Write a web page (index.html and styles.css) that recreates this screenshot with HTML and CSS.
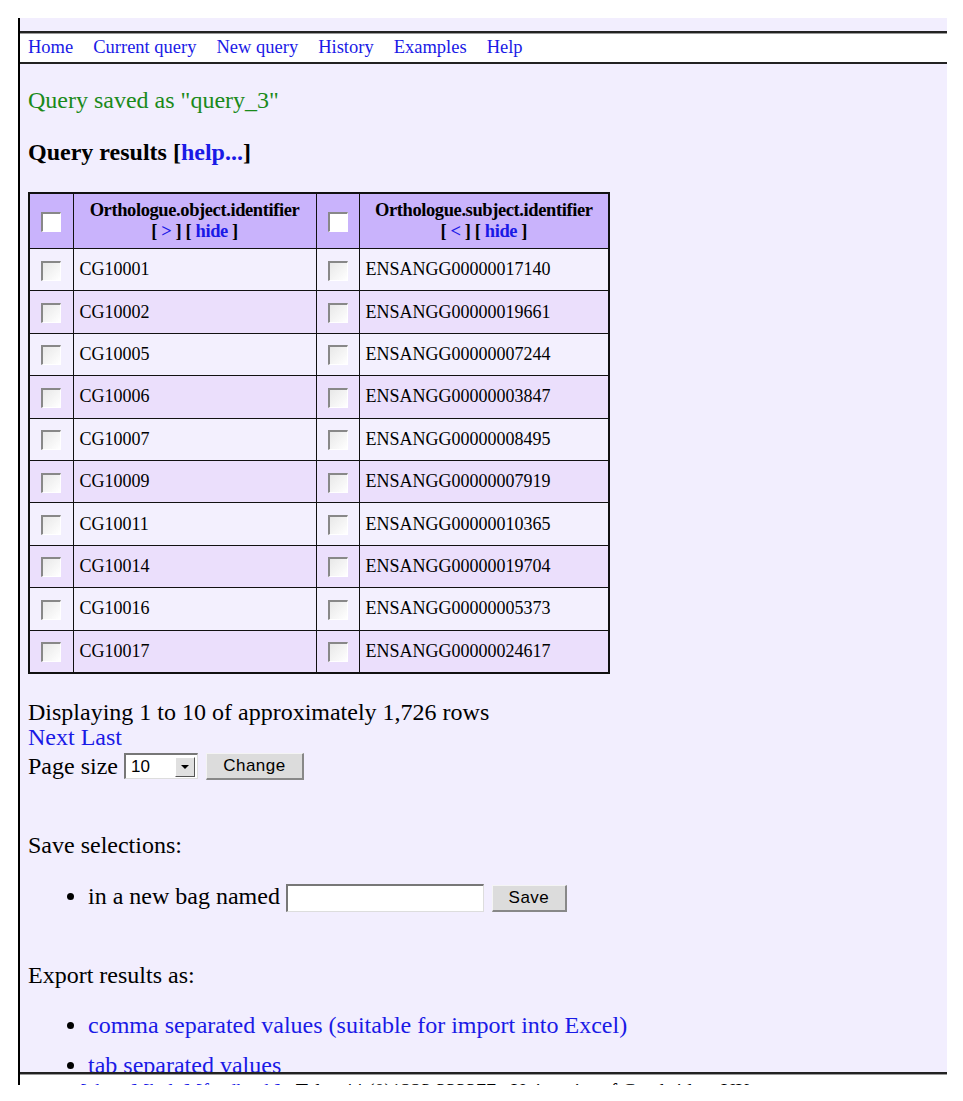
FILE: index.html
```html
<!DOCTYPE html>
<html>
<head>
<meta charset="utf-8">
<title>Query results</title>
<link rel="stylesheet" href="styles.css">
</head>
<body>
<div class="frame">
  <div class="topstrip"></div>
  <nav class="nav">
    <a href="#">Home</a>
    <a href="#">Current query</a>
    <a href="#">New query</a>
    <a href="#">History</a>
    <a href="#">Examples</a>
    <a href="#">Help</a>
  </nav>
  <main class="main">
    <p class="saved">Query saved as "query_3"</p>
    <h2 class="title">Query results [<a href="#">help...</a>]</h2>
    <table class="results">
      <colgroup>
        <col class="c-check"><col class="c-obj"><col class="c-check2"><col class="c-subj">
      </colgroup>
      <thead>
        <tr>
          <th><span class="cb cb-head"></span></th>
          <th>Orthologue.object.identifier<br>[ <a href="#">&gt;</a> ] [ <a href="#">hide</a> ]</th>
          <th><span class="cb cb-head"></span></th>
          <th>Orthologue.subject.identifier<br>[ <a href="#">&lt;</a> ] [ <a href="#">hide</a> ]</th>
        </tr>
      </thead>
      <tbody>
        <tr class="odd"><td><span class="cb"></span></td><td>CG10001</td><td><span class="cb"></span></td><td>ENSANGG00000017140</td></tr>
        <tr class="even"><td><span class="cb"></span></td><td>CG10002</td><td><span class="cb"></span></td><td>ENSANGG00000019661</td></tr>
        <tr class="odd"><td><span class="cb"></span></td><td>CG10005</td><td><span class="cb"></span></td><td>ENSANGG00000007244</td></tr>
        <tr class="even"><td><span class="cb"></span></td><td>CG10006</td><td><span class="cb"></span></td><td>ENSANGG00000003847</td></tr>
        <tr class="odd"><td><span class="cb"></span></td><td>CG10007</td><td><span class="cb"></span></td><td>ENSANGG00000008495</td></tr>
        <tr class="even"><td><span class="cb"></span></td><td>CG10009</td><td><span class="cb"></span></td><td>ENSANGG00000007919</td></tr>
        <tr class="odd"><td><span class="cb"></span></td><td>CG10011</td><td><span class="cb"></span></td><td>ENSANGG00000010365</td></tr>
        <tr class="even"><td><span class="cb"></span></td><td>CG10014</td><td><span class="cb"></span></td><td>ENSANGG00000019704</td></tr>
        <tr class="odd"><td><span class="cb"></span></td><td>CG10016</td><td><span class="cb"></span></td><td>ENSANGG00000005373</td></tr>
        <tr class="even"><td><span class="cb"></span></td><td>CG10017</td><td><span class="cb"></span></td><td>ENSANGG00000024617</td></tr>
      </tbody>
    </table>
    <div class="paging">
      <div>Displaying 1 to 10 of approximately 1,726 rows</div>
      <div><a href="#">Next</a> <a href="#">Last</a></div>
      <div class="pagesize">Page size
        <span class="select"><span class="sel-val">10</span><span class="sel-btn"><svg width="10" height="6" viewBox="0 0 10 6"><path d="M1 1h8L5 5z" fill="#000"/></svg></span></span>
        <span class="btn btn-change">Change</span>
      </div>
    </div>
    <p class="section save-head">Save selections:</p>
    <ul class="list save-list">
      <li>in a new bag named <span class="textbox"></span> <span class="btn btn-save">Save</span></li>
    </ul>
    <p class="section export-head">Export results as:</p>
    <ul class="list export-list">
      <li><a href="#">comma separated values (suitable for import into Excel)</a></li>
      <li><a href="#">tab separated values</a></li>
    </ul>
  </main>
  <footer class="footer">
    <span class="foot-text"><a href="#">[about]</a> <a href="#">[help]</a> <a href="#">[feedback]</a> &nbsp; Tel: +44 (0)1223 333377 &nbsp; University of Cambridge, UK</span>
  </footer>
</div>
</body>
</html>
```
FILE: styles.css
```css
html, body {
  margin: 0;
  padding: 0;
  background: #ffffff;
}
body {
  font-family: "Liberation Serif", "Times New Roman", serif;
  color: #000;
}
a {
  color: #1a1ae6;
  text-decoration: none;
}
.frame {
  margin: 18px 0 0 18px;
  width: 927px;
  border-left: 2px solid #000;
  height: 1067px;
  overflow: hidden;
}
.topstrip {
  height: 13px;
  background: #f2eefe;
}
.nav {
  background: #ffffff;
  border-top: 2px solid #222;
  border-bottom: 2px solid #222;
  box-shadow: inset 0 1px 0 #999;
  height: 29px;
  display: flex;
  align-items: center;
  gap: 20px;
  padding-left: 8px;
  font-size: 18.5px;
}
.main {
  background: #f2eefe;
  height: 1008px;
  overflow: hidden;
  padding-left: 8px;
  padding-top: 1px;
  box-sizing: border-box;
}
.saved {
  color: #1a8a1a;
  font-size: 24px;
  line-height: 28px;
  margin: 21px 0 0 0;
}
.title {
  font-size: 24px;
  line-height: 28px;
  margin: 24px 0 0 0;
}
.results {
  margin-top: 26px;
  border-collapse: collapse;
  border: 2px solid #111;
  table-layout: fixed;
  width: 580px;
}
.c-check { width: 44px; }
.c-obj { width: 243px; }
.c-check2 { width: 43px; }
.c-subj { width: 250px; }
.results th, .results td {
  border: 1px solid #111;
  padding: 0;
}
.results th {
  background: #c9b3fc;
  height: 54px;
  font-size: 18.5px;
  line-height: 21px;
  font-weight: bold;
  text-align: center;
  letter-spacing: -0.4px;
}
.results td {
  height: 41.4px;
  font-size: 18px;
  padding-left: 6px;
}
.results td:nth-child(odd) {
  padding-left: 0;
  text-align: center;
}
.odd td { background: #f3f0fe; }
.even td { background: #ebdffc; }
.cb {
  display: inline-block;
  width: 17px;
  height: 17px;
  vertical-align: middle;
  border-top: 2px solid #888;
  border-left: 2px solid #888;
  border-right: 1px solid #fff;
  border-bottom: 1px solid #fff;
  background: linear-gradient(135deg, #e8e8e8, #ffffff);
}
.cb-head {
  background: #ffffff;
}
.paging {
  margin-top: 26px;
  font-size: 24px;
  line-height: 25px;
}
.pagesize {
  display: flex;
  align-items: center;
  gap: 6px;
  margin-top: 3px;
}
.select {
  display: inline-flex;
  align-items: center;
  box-sizing: border-box;
  width: 74px;
  height: 26px;
  background: #fff;
  border-top: 2px solid #777;
  border-left: 2px solid #777;
  border-right: 1px solid #ddd;
  border-bottom: 1px solid #ddd;
  font-family: "Liberation Sans", Arial, sans-serif;
  font-size: 17px;
  justify-content: space-between;
  padding-left: 5px;
  padding-right: 2px;
}
.sel-btn {
  display: inline-flex;
  align-items: center;
  justify-content: center;
  width: 18px;
  height: 18px;
  background: #e0e0e0;
  border-top: 1px solid #fff;
  border-left: 1px solid #fff;
  border-right: 1px solid #555;
  border-bottom: 1px solid #555;
}
.btn {
  display: inline-flex;
  align-items: center;
  justify-content: center;
  box-sizing: border-box;
  height: 27px;
  background: #dcdcdc;
  border-top: 1px solid #f4f4f4;
  border-left: 1px solid #f4f4f4;
  border-right: 2px solid #888;
  border-bottom: 2px solid #888;
  font-family: "Liberation Sans", Arial, sans-serif;
  font-size: 17px;
  letter-spacing: 0.5px;
}
.btn-change {
  width: 98px;
  margin-left: 2px;
}
.section {
  font-size: 24px;
  line-height: 28px;
  margin: 0;
}
.save-head {
  margin-top: 51px;
}
.list {
  margin: 0;
  padding-left: 60px;
  font-size: 24px;
  line-height: 28px;
  list-style: disc;
}
.save-list {
  margin-top: 23px;
}
.textbox {
  display: inline-block;
  vertical-align: middle;
  box-sizing: border-box;
  width: 198px;
  height: 28px;
  background: #fff;
  border-top: 2px solid #777;
  border-left: 2px solid #777;
  border-right: 1px solid #ddd;
  border-bottom: 1px solid #ddd;
}
.btn-save {
  width: 75px;
  vertical-align: middle;
  margin-left: 2px;
}
.export-head {
  margin-top: 49px;
}
.export-list {
  margin-top: 22px;
}
.export-list li {
  margin-bottom: 12px;
}
.footer {
  background: #fff;
  border-top: 2px solid #222;
  box-shadow: inset 0 1px 0 #999;
  height: 12px;
  overflow: hidden;
  padding-left: 60px;
  font-size: 20px;
  line-height: 24px;
  white-space: nowrap;
}
.foot-text {
  display: block;
  padding-top: 5px;
}
```
